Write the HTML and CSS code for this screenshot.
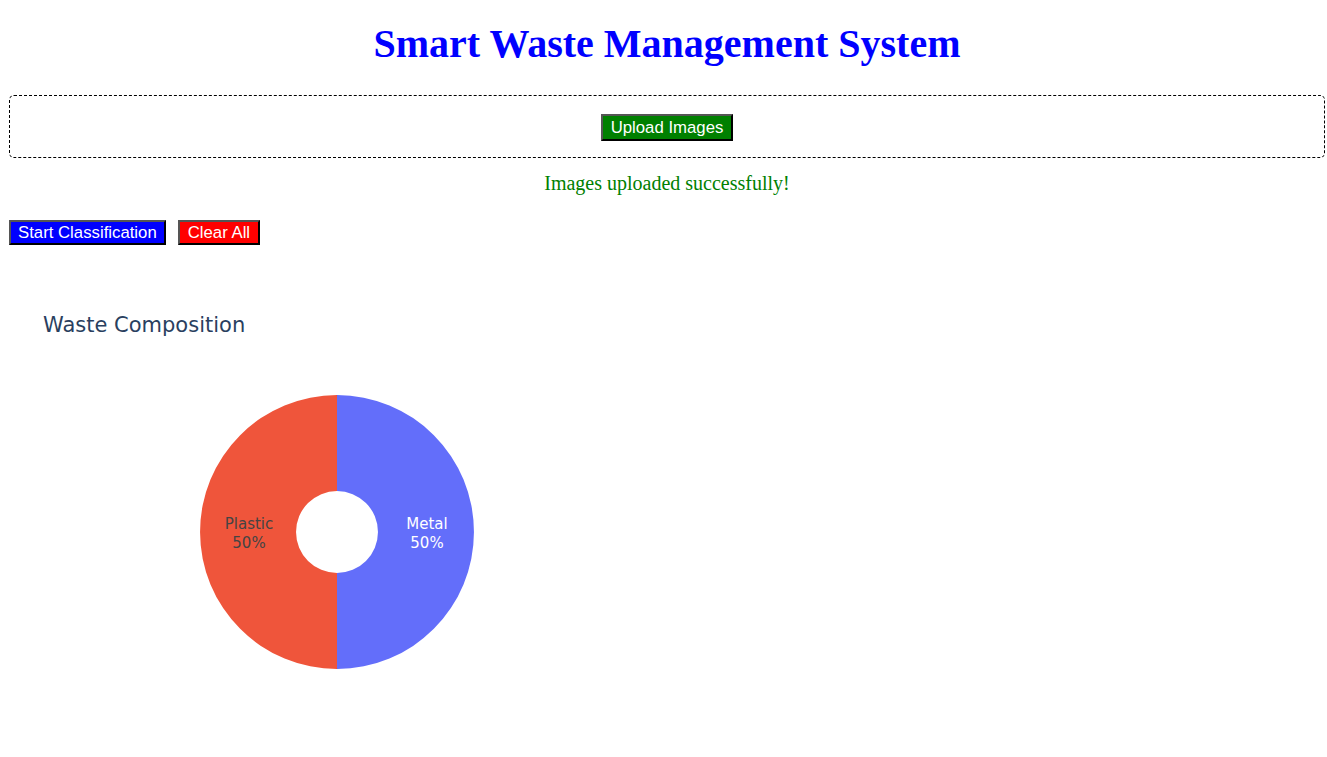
FILE: index.html
```html
<!DOCTYPE html>
<html>
<head>
<meta charset="utf-8">
<link rel="stylesheet" href="styles.css">
</head>
<body>
<div class="page">
  <h1 class="title">Smart Waste Management System</h1>
  <div class="upload-box">
    <button class="btn btn-upload">Upload Images</button>
  </div>
  <p class="status">Images uploaded successfully!</p>
  <div class="actions">
    <button class="btn btn-start">Start Classification</button>
    <button class="btn btn-clear">Clear All</button>
  </div>
  <div class="chart">
    <svg width="700" height="450" viewBox="0 0 700 450" xmlns="http://www.w3.org/2000/svg">
      <text class="chart-title" x="34" y="67">Waste Composition</text>
      <path d="M328,130 A137,137 0 0 1 328,404 L328,308 A41,41 0 0 0 328,226 Z" fill="#636efa"/>
      <path d="M328,404 A137,137 0 0 1 328,130 L328,226 A41,41 0 0 0 328,308 Z" fill="#ef553b"/>
      <text class="slice-label dark" x="240" y="264" text-anchor="middle">Plastic</text>
      <text class="slice-label dark" x="240" y="283" text-anchor="middle">50%</text>
      <text class="slice-label light" x="418" y="264" text-anchor="middle">Metal</text>
      <text class="slice-label light" x="418" y="283" text-anchor="middle">50%</text>
    </svg>
  </div>
</div>
</body>
</html>
```
FILE: styles.css
```css
html, body {
  margin: 0;
  padding: 0;
  background: #fff;
}
.page {
  padding: 0 2px 0 9px;
  font-family: "Liberation Serif", "Times New Roman", serif;
}
.title {
  margin: 0;
  padding-top: 20px;
  height: 95px;
  box-sizing: border-box;
  text-align: center;
  color: #0000ff;
  font-size: 40px;
  font-weight: bold;
  line-height: 48px;
}
.upload-box {
  border: 1px dashed #000;
  border-radius: 5px;
  padding: 18px 0 15px;
  text-align: center;
  height: 63px;
  box-sizing: border-box;
}
.btn {
  font-family: "Liberation Sans", Arial, sans-serif;
  color: #fff;
  border: 2px solid;
  border-color: #555 #000 #000 #555;
  font-size: 16.75px;
  line-height: 17px;
  padding: 3px 8px;
  cursor: pointer;
  display: inline-block;
  margin: 0;
}
.btn-upload {
  background: #008000;
  height: 27px;
}
.status {
  margin: 0;
  padding-top: 13px;
  height: 40px;
  box-sizing: border-box;
  text-align: center;
  color: #008000;
  font-size: 20px;
  line-height: 24px;
}
.actions {
  display: flex;
  gap: 12px;
  margin-top: 22px;
}
.btn-start {
  background: #0000ff;
  height: 25px;
  padding: 2px 7px;
}
.btn-clear {
  background: #ff0000;
  height: 25px;
  padding: 2px 8px;
}
.chart {
  margin-top: 20px;
}
.chart svg {
  display: block;
}
.chart-title {
  font-family: "DejaVu Sans", Verdana, sans-serif;
  font-size: 21px;
  fill: #2a3f5f;
}
.slice-label {
  font-family: "DejaVu Sans", Verdana, sans-serif;
  font-size: 15px;
}
.slice-label.dark {
  fill: #444444;
}
.slice-label.light {
  fill: #ffffff;
}
```
